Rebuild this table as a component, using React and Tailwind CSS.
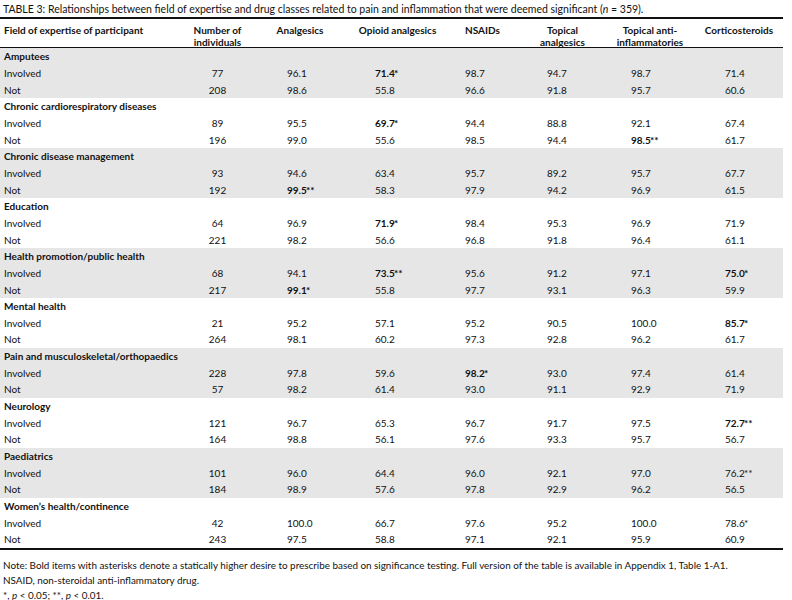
import React from "react";

const groups = [
  ["Amputees", ["77", "96.1", "71.4*b", "98.7", "94.7", "98.7", "71.4"], ["208", "98.6", "55.8", "96.6", "91.8", "95.7", "60.6"]],
  ["Chronic cardiorespiratory diseases", ["89", "95.5", "69.7*b", "94.4", "88.8", "92.1", "67.4"], ["196", "99.0", "55.6", "98.5", "94.4", "98.5**b", "61.7"]],
  ["Chronic disease management", ["93", "94.6", "63.4", "95.7", "89.2", "95.7", "67.7"], ["192", "99.5**b", "58.3", "97.9", "94.2", "96.9", "61.5"]],
  ["Education", ["64", "96.9", "71.9*b", "98.4", "95.3", "96.9", "71.9"], ["221", "98.2", "56.6", "96.8", "91.8", "96.4", "61.1"]],
  ["Health promotion/public health", ["68", "94.1", "73.5**b", "95.6", "91.2", "97.1", "75.0*b"], ["217", "99.1*b", "55.8", "97.7", "93.1", "96.3", "59.9"]],
  ["Mental health", ["21", "95.2", "57.1", "95.2", "90.5", "100.0", "85.7*b"], ["264", "98.1", "60.2", "97.3", "92.8", "96.2", "61.7"]],
  ["Pain and musculoskeletal/orthopaedics", ["228", "97.8", "59.6", "98.2*b", "93.0", "97.4", "61.4"], ["57", "98.2", "61.4", "93.0", "91.1", "92.9", "71.9"]],
  ["Neurology", ["121", "96.7", "65.3", "96.7", "91.7", "97.5", "72.7**b"], ["164", "98.8", "56.1", "97.6", "93.3", "95.7", "56.7"]],
  ["Paediatrics", ["101", "96.0", "64.4", "96.0", "92.1", "97.0", "76.2**"], ["184", "98.9", "57.6", "97.8", "92.9", "96.2", "56.5"]],
  ["Women\u2019s health/continence", ["42", "100.0", "66.7", "97.6", "95.2", "100.0", "78.6*"], ["243", "97.5", "58.8", "97.1", "92.1", "95.9", "60.9"]],
];

const cols = "grid grid-cols-[185px_65px_100px_95px_75px_85px_90px_88px]";
const pads = ["pl-[37px]", "pl-[25px]", "pl-[20px]", "pl-[27px]", "pl-[26px]", "pl-[30px]"];

const Value = ({ raw, pad }) => {
  const bold = raw.endsWith("b");
  const v = bold ? raw.slice(0, -1) : raw;
  const num = v.replace(/\*/g, "");
  const stars = v.slice(num.length);
  return (
    <div className={`${pad} whitespace-nowrap ${bold ? "font-bold" : ""}`}>
      <span className="inline-block w-[19px] text-right">{num}</span>
      {stars && <span>{stars}</span>}
    </div>
  );
};

const Row = ({ label, values }) => (
  <div className={`${cols} h-[16.67px] items-center`}>
    <div className="pl-[4px]">{label}</div>
    <div className="text-center">{values[0]}</div>
    {values.slice(1).map((v, i) => (
      <Value key={i} raw={v} pad={pads[i]} />
    ))}
  </div>
);

export default function App() {
  return (
    <div className="w-[792px] h-[600px] bg-white text-[#111] font-['Lato','Open_Sans',sans-serif] text-[10px] leading-none">
      <div className="pl-[3px] pt-[4px] h-[17px] text-[10.5px]">
        TABLE 3: Relationships between field of expertise and drug classes related to pain and inflammation that were deemed significant (<i>n</i> = 359).
      </div>
      <div className="w-[783px] border-t-2 border-b-2 border-[#111]">
        <div className={`${cols} h-[29px] pt-[5px] font-bold border-b border-[#111] leading-[12px]`}>
          <div className="pl-[4px]">Field of expertise of participant</div>
          <div className="text-center">Number of<br />individuals</div>
          <div className="text-center">Analgesics</div>
          <div className="text-center">Opioid analgesics</div>
          <div className="text-center">NSAIDs</div>
          <div className="text-center">Topical<br />analgesics</div>
          <div className="text-center">Topical anti-<br />inflammatories</div>
          <div className="text-center">Corticosteroids</div>
        </div>
        {groups.map(([name, inv, not], gi) => (
          <div key={name} className={gi % 2 === 0 ? "bg-[#e6e6e6]" : "bg-white"}>
            <div className="h-[16.67px] flex items-center pl-[4px] font-bold">{name}</div>
            <Row label="Involved" values={inv} />
            <Row label="Not" values={not} />
          </div>
        ))}
      </div>
      <div className="pl-[3px] pt-[8px] text-[9.9px] leading-[15px]">
        <div>Note: Bold items with asterisks denote a statically higher desire to prescribe based on significance testing. Full version of the table is available in Appendix 1, Table 1-A1.</div>
        <div>NSAID, non-steroidal anti-inflammatory drug.</div>
        <div>*, <i>p</i> &lt; 0.05; **, <i>p</i> &lt; 0.01.</div>
      </div>
    </div>
  );
}
